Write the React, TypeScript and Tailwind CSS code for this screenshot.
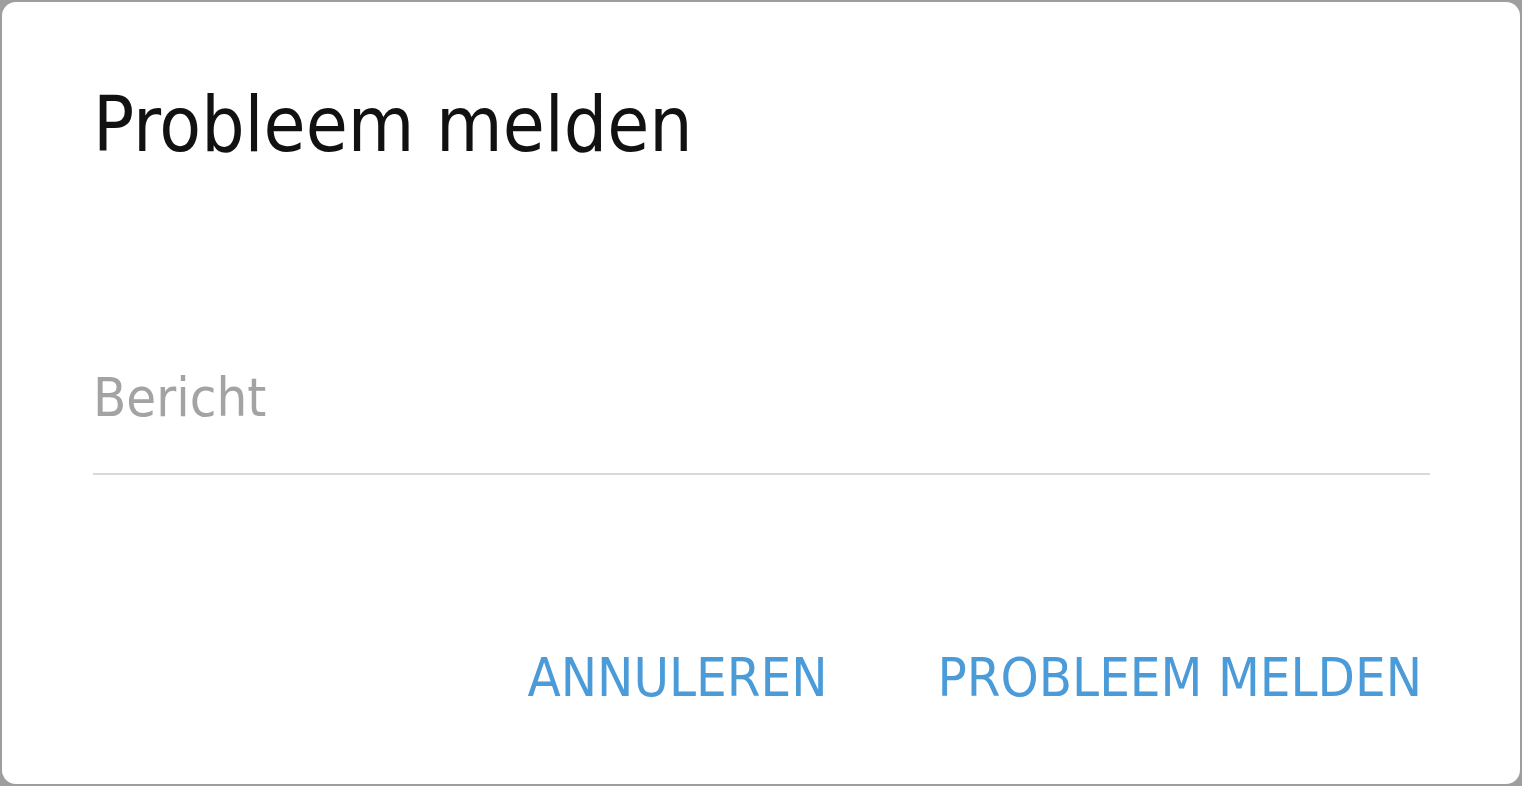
export default function App() {
  return (
    <div
      className="w-[1522px] h-[786px] bg-[#9e9e9e] p-[2px]"
      style={{ fontFamily: '"DejaVu Sans Condensed", "DejaVu Sans", sans-serif' }}
    >
      <div className="flex h-full flex-col rounded-[14px] bg-white pl-[91px] pr-[90px]">
        <h1 className="mt-[78px] text-[76px] leading-[90px] font-normal text-[#111]">Probleem melden</h1>

        <div className="mt-[195px] border-b-2 border-[#d9d9d9] pb-[42px]">
          <input
            className="w-full bg-transparent text-[54px] leading-[66px] text-[#222] placeholder:text-[#a3a3a3] outline-none"
            placeholder="Bericht"
            style={{ fontFamily: 'inherit' }}
          />
        </div>

        <div className="mt-auto mb-[76px] mr-[8px] flex justify-end gap-[110px]">
          <button className="text-[54px] leading-[60px] uppercase text-[#4a9bd8]">Annuleren</button>
          <button className="text-[54px] leading-[60px] uppercase text-[#4a9bd8]">Probleem melden</button>
        </div>
      </div>
    </div>
  );
}
